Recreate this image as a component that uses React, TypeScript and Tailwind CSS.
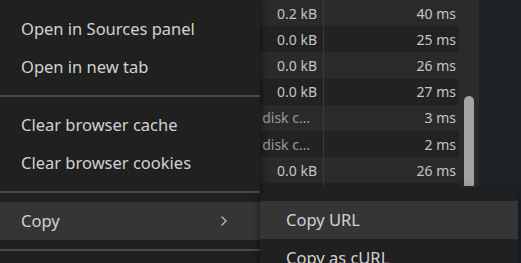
import React from "react";

const rows = [
  { size: "0.2 kB", time: "40 ms" },
  { size: "0.0 kB", time: "25 ms" },
  { size: "0.0 kB", time: "26 ms" },
  { size: "0.0 kB", time: "27 ms" },
  { size: "disk c…", time: "3 ms", dim: true },
  { size: "disk c…", time: "2 ms", dim: true },
  { size: "0.0 kB", time: "26 ms" },
  { size: "", time: "" },
  { size: "", time: "" },
  { size: "", time: "" },
];

function MenuItem({ label, active, chevron }: { label: string; active?: boolean; chevron?: boolean }) {
  return (
    <div
      className={`flex h-[38px] items-center justify-between pl-[21px] pr-[32px] ${
        active ? "bg-[#353535]" : ""
      }`}
    >
      <span>{label}</span>
      {chevron && (
        <svg width="8" height="12" viewBox="0 0 8 12" fill="none">
          <path d="M2 2l4 4-4 4" stroke="#b8b8b8" strokeWidth="1.4" strokeLinecap="round" strokeLinejoin="round" />
        </svg>
      )}
    </div>
  );
}

function Separator() {
  return (
    <div className="flex h-[20px] items-center">
      <div className="h-[2px] w-full bg-[#4a4a4a]" />
    </div>
  );
}

export default function App() {
  return (
    <div className="relative h-[263px] w-[521px] overflow-hidden bg-[#1e2226] font-['Noto_Sans',sans-serif]">
      <div className="flex h-full">
        <div className="w-[459px] text-[14px] text-[#c6c6c6]">
          {rows.map((r, i) => (
            <div
              key={i}
              className={`flex h-[26.2px] items-center ${i % 2 === 0 ? "bg-[#2a2a2a]" : "bg-[#222222]"}`}
            >
              <div
                className={`flex h-full w-[324px] items-center justify-end border-r border-[#3a3a3a] pr-[6px] ${
                  r.dim ? "pr-[13px] text-[#9a9a9a]" : ""
                }`}
              >
                {r.size}
              </div>
              <div className="flex-1 pr-[3px] text-right">{r.time}</div>
            </div>
          ))}
        </div>
        <div className="relative w-[20px] bg-[#2b2b2b]">
          <div className="absolute left-[5px] top-[96px] h-[90px] w-[10px] rounded-t-full bg-[#a3a3a3]" />
        </div>
        <div className="flex-1" />
      </div>

      <div className="absolute left-0 top-0 w-[260px] bg-[#202020] pt-[10px] text-[16.5px] text-[#d2d2d2] shadow-[2px_0_6px_rgba(0,0,0,0.4)]">
        <MenuItem label="Open in Sources panel" />
        <MenuItem label="Open in new tab" />
        <Separator />
        <MenuItem label="Clear browser cache" />
        <MenuItem label="Clear browser cookies" />
        <Separator />
        <MenuItem label="Copy" active chevron />
        <Separator />
        <div className="h-[38px]" />
      </div>

      <div className="absolute left-[260px] top-[188px] w-[258px] rounded-[10px] bg-[#202020] pt-[13px] text-[16.5px] text-[#d2d2d2] shadow-[0_2px_8px_rgba(0,0,0,0.5)]">
        <div className="flex h-[38px] items-center bg-[#353535] pl-[26px]">Copy URL</div>
        <div className="flex h-[38px] items-center pl-[26px]">Copy as cURL</div>
      </div>
    </div>
  );
}
